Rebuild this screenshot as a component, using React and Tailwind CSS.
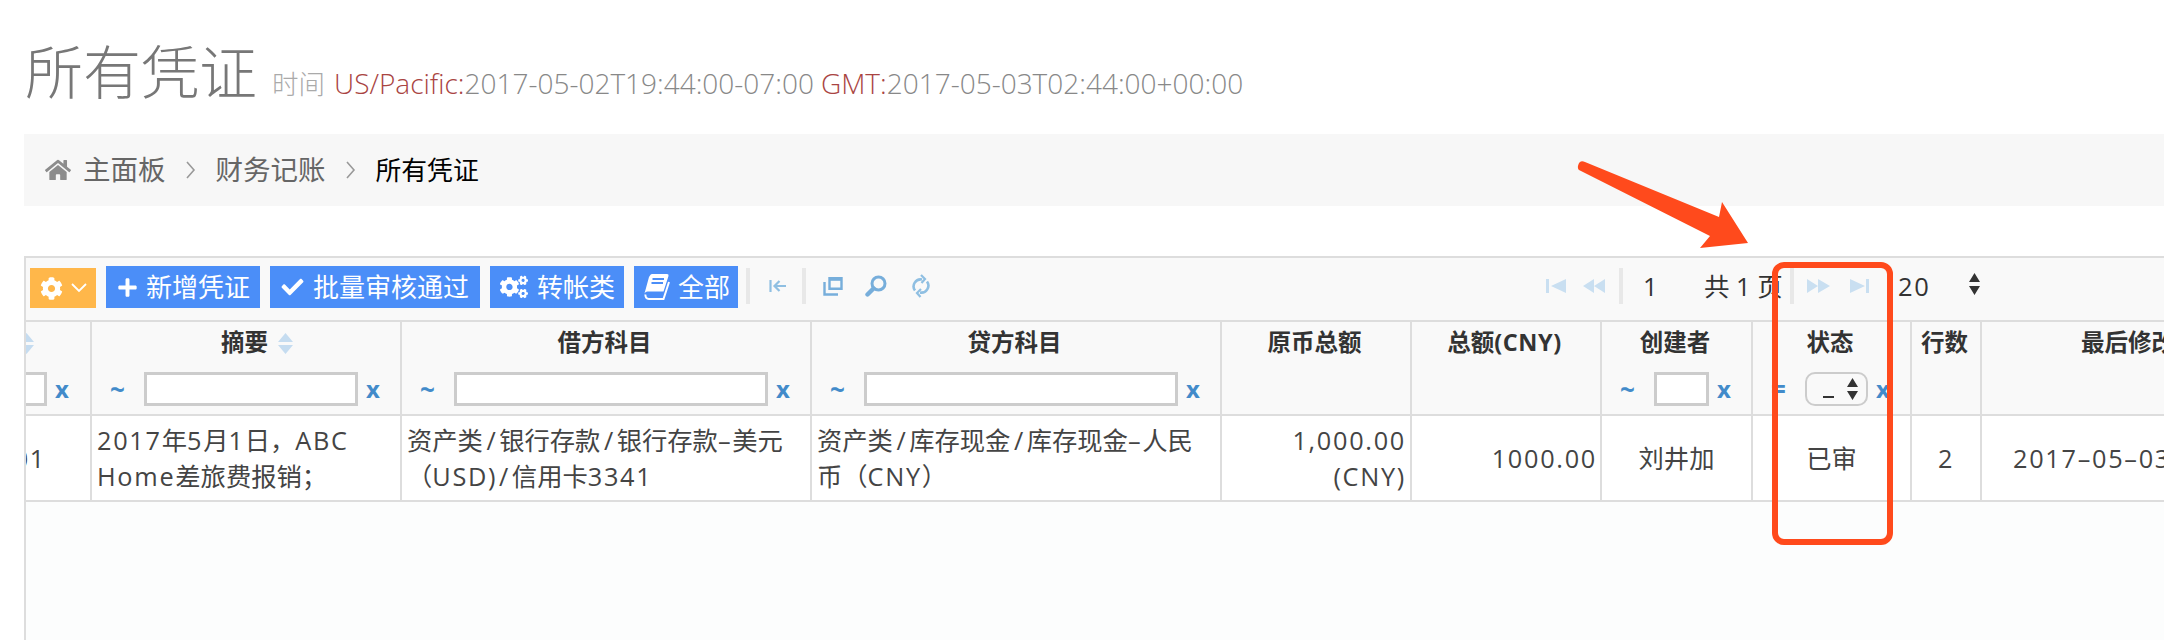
//
// ALL VOUCHERS PAGE
// =================
// Page header, breadcrumb and the voucher grid with its toolbar, filters and pager.
//
import { FaCheck, FaCog, FaCogs, FaHome, FaPlus } from "react-icons/fa";

const BaseFont = "font-['Open_Sans','Noto_Sans_CJK_SC',sans-serif]";

// Latin runs in the grid are spaced wider than the Chinese text around them.
function N({ children }) {
    return <span className="tracking-[1.7px]">{children}</span>;
}

// Path separator, also wider than Open Sans gives it
function S() {
    return <span className="mx-[3.5px]">/</span>;
}

function ToolButton({ icon, text, className }) {
    return (
        <div className={"flex items-center h-[42px] bg-[#4b8ef8] text-white text-[26px] leading-none " + className}>
            {icon}
            <span>{text}</span>
        </div>
    );
}

function Separator({ className }) {
    return <div className={"w-[4px] h-[36px] mt-[2px] bg-[#e8e8e8] " + className}></div>;
}

// Book icon, slanted like the one in the toolbar
function BookIcon() {
    return (
        <svg width="26" height="26" viewBox="0 0 26 26" className="mr-[8px] shrink-0">
            <path d="M6 1.5Q6.5 0 8 0H23Q25 0 24.5 2L19.5 17.5H3.5Q1.5 17.5 .5 19.5L5 3Z" fill="white" />
            <path d="M8.5 5H20M7.5 9H19" stroke="#4b8ef8" strokeWidth="1.8" />
            <path d="M1.5 20.5C1 23 2.5 25 5 25H19.5L25 8" fill="none" stroke="white" strokeWidth="2" />
        </svg>
    );
}

function Disabled({ d, width, className }) {
    return (
        <svg width={width} height="16" viewBox={"0 0 " + width + " 16"} className={"text-[#c9dff1] " + className} fill="currentColor">
            <path d={d} />
        </svg>
    );
}

function SortArrows({ className }) {
    return (
        <svg width="15" height="21" viewBox="0 0 15 21" fill="#c5dcf0" className={className}>
            <path d="M7.5 0 15 9H0zM0 12h15l-7.5 9z" />
        </svg>
    );
}

// One filter row: operator, input, clear link
function Filter({ op = "~", box }) {
    return (
        <div className="flex items-center h-[34px] pl-[18px] pr-[22px]">
            <span className="w-[34px] shrink-0 text-left text-[#428bca] font-bold text-[26px] leading-none">{op}</span>
            {box || <input className="flex-1 min-w-0 h-[34px] bg-white border-[3px] border-[#cccccc] outline-none" />}
            <span className="w-[12px] ml-[8px] shrink-0 text-[#428bca] font-bold text-[24px] leading-none">x</span>
        </div>
    );
}

function SelectBox() {
    return (
        <div className="flex-1 min-w-0 h-[34px] flex items-center justify-end pr-[8px] rounded-[10px] border-[2px] border-[#cccccc] bg-[#f9f9f9]">
            <div className="w-[11px] h-[2px] mt-[16px] mr-[13px] bg-[#333333]"></div>
            <svg width="11" height="22" viewBox="0 0 11 22" fill="#333333">
                <path d="M5.5 0 11 9H0zM0 13h11l-5.5 9z" />
            </svg>
        </div>
    );
}

function Th({ title, sort, filter, box, op }) {
    return (
        <th className="p-0 align-top bg-[#f9f9f9] border-r-2 border-[#dddddd] font-bold">
            <div className="flex flex-col h-[92px]">
                <div className="flex items-center justify-center gap-[10px] h-[42px] pr-[3px] text-[23.5px] text-[#333333] leading-none">
                    <span>{title}</span>
                    {sort && <SortArrows className="-mr-[25px]" />}
                </div>
                {filter && <div className="mt-[8px] font-normal"><Filter box={box} op={op} /></div>}
            </div>
        </th>
    );
}

function Td({ children, className }) {
    return (
        <td className={"h-[86px] px-[5px] py-0 align-middle bg-white border-t-2 border-r-2 border-[#dddddd] text-[25.3px] leading-[36px] whitespace-nowrap text-[#444444] " + className}>
            {children}
        </td>
    );
}

function Chevron() {
    return (
        <span className="w-[50px] flex justify-center">
            <svg width="10" height="20" viewBox="0 0 10 20" fill="none" stroke="#999999" strokeWidth="1.6"><path d="M1 2l7 8-7 8" /></svg>
        </span>
    );
}

function App() {
    return (
        <div className={"relative w-[2164px] h-[640px] overflow-hidden bg-white " + BaseFont}>
            {/* Page title */}
            <div className="flex items-baseline h-[134px] pl-[25px] pt-[38px] whitespace-nowrap">
                <h1 className="text-[58px] leading-[68px] font-light text-[#777777]">所有凭证</h1>
                <div className="ml-[15px] text-[28px] font-light text-[#888888]">
                    <span className="text-[26.5px] text-[#aaaaaa]">时间</span>
                    <span className="ml-[9px] text-[#a94442]">US/Pacific:</span>2017-05-02T19:44:00-07:00
                    <span className="ml-[7px] text-[#a94442]">GMT:</span>2017-05-03T02:44:00+00:00
                </div>
            </div>

            {/* Breadcrumb */}
            <div className="flex items-center h-[72px] ml-[24px] pl-[21px] bg-[#f7f7f7] text-[27.5px] text-[#666666]">
                <FaHome className="w-[26px] h-[24px] mr-[12px] text-[#8c8c8c]" />
                <span>主面板</span>
                <Chevron />
                <span>财务记账</span>
                <Chevron />
                <span className="text-[25.8px] text-black">所有凭证</span>
            </div>

            {/* Grid */}
            <div className="flex flex-col h-[384px] mt-[50px] ml-[24px] border-t-2 border-l-2 border-[#dddddd] bg-[#fcfdfd]">
                {/* Toolbar */}
                <div className="flex items-start shrink-0 h-[64px] pt-[8px] pl-[4px] bg-[#f9f9f9] border-b-2 border-[#dddddd] whitespace-nowrap overflow-hidden">
                    <div className="flex items-center shrink-0 w-[66px] h-[40px] mt-[2px] pl-[10px] bg-[#ffb74a] text-white">
                        <FaCog className="w-[23px] h-[23px]" />
                        <svg width="16" height="10" viewBox="0 0 16 10" fill="none" stroke="white" strokeWidth="1.8" className="ml-[8px]">
                            <path d="M1 1l7 7 7-7" />
                        </svg>
                    </div>
                    <ToolButton className="ml-[10px] pl-[11px] w-[154px] shrink-0" icon={<FaPlus className="w-[21px] h-[21px] mr-[8px]" />} text="新增凭证" />
                    <ToolButton className="ml-[10px] pl-[11px] w-[210px] shrink-0" icon={<FaCheck className="w-[23px] h-[22px] mr-[9px]" />} text="批量审核通过" />
                    <ToolButton className="ml-[10px] pl-[10px] w-[134px] shrink-0" icon={<FaCogs className="w-[28px] h-[24px] mr-[9px]" />} text="转帐类" />
                    <ToolButton className="ml-[10px] pl-[10px] w-[104px] shrink-0" icon={<BookIcon />} text="全部" />
                    <Separator className="ml-[8px] shrink-0" />
                    <svg width="18" height="16" viewBox="0 0 18 16" fill="none" stroke="#8fbfe2" strokeWidth="2.2" className="ml-[19px] mt-[12px] shrink-0">
                        <path d="M1.5 2v12M17 8H6M10.5 3 5.5 8l5 5" />
                    </svg>
                    <Separator className="ml-[15px] shrink-0" />
                    {/* New window */}
                    <svg width="20" height="20" viewBox="0 0 20 20" fill="none" stroke="#77aedb" strokeWidth="2.4" className="ml-[17px] mt-[10px] shrink-0">
                        <path d="M6.5 2.2h12v10.5h-12z" />
                        <path d="M6.5 3h12" strokeWidth="3.6" />
                        <path d="M1.5 6v12.5h13.5" />
                    </svg>
                    {/* Find */}
                    <svg width="22" height="22" viewBox="0 0 22 22" fill="none" stroke="#77aedb" className="ml-[22px] mt-[9px] shrink-0">
                        <circle cx="13.5" cy="8.5" r="6.5" strokeWidth="3" />
                        <path d="M8.5 13.5 2.5 19.5" strokeWidth="4.4" strokeLinecap="round" />
                    </svg>
                    {/* Refresh */}
                    <svg width="20" height="24" viewBox="0 0 20 24" fill="none" stroke="#8fbfe2" strokeWidth="2.6" className="ml-[24px] mt-[8px] shrink-0">
                        <path d="M11 5.5A7 7 0 0 0 4 16.5" />
                        <path d="M9 18.5A7 7 0 0 0 16 7.5" />
                        <path d="M10 1 14 5 10.5 9" strokeWidth="2.2" />
                        <path d="M10 15 6 19 9.5 23" strokeWidth="2.2" />
                    </svg>

                    {/* Pager */}
                    <div className="flex items-start shrink-0 ml-[615px] text-[25.5px] leading-[40px] text-[#333333]">
                        <Disabled width={20} d="M0 1h3v14H0zM20 1v14L5 8z" className="mt-[12px]" />
                        <Disabled width={22} d="M0 8l11-7v14zM11 8l11-7v14z" className="ml-[17px] mt-[12px]" />
                        <Separator className="ml-[14px]" />
                        <span className="ml-[20px] w-[12px]">1</span>
                        <span className="ml-[49px] w-[80px]">共 1 页</span>
                        <Separator className="ml-[6px]" />
                        <Disabled width={23} d="M0 1l11 7-11 7zM11 1l12 7-12 7z" className="ml-[13px] mt-[12px]" />
                        <Disabled width={19} d="M0 1l15 7-15 7zM16 1h3v14h-3z" className="ml-[20px] mt-[12px]" />
                        <span className="ml-[29px] w-[30px]"><N>20</N></span>
                        <svg width="11" height="22" viewBox="0 0 11 22" fill="#333333" className="ml-[41px] mt-[7px]">
                            <path d="M5.5 0 11 9H0zM0 13h11l-5.5 9z" />
                        </svg>
                    </div>
                </div>

                {/* Table, scrolled a little to the right as in the page */}
                <div className="overflow-hidden">
                    <table className="table-fixed border-separate border-spacing-0 w-[2334px] -ml-[34px]">
                        <colgroup>
                            <col className="w-[100px]" />
                            <col className="w-[310px]" />
                            <col className="w-[410px]" />
                            <col className="w-[410px]" />
                            <col className="w-[190px]" />
                            <col className="w-[190px]" />
                            <col className="w-[151px]" />
                            <col className="w-[159px]" />
                            <col className="w-[70px]" />
                            <col className="w-[344px]" />
                        </colgroup>
                        <thead>
                            <tr>
                                <th className="p-0 align-top bg-[#f9f9f9] border-r-2 border-[#dddddd]">
                                    <div className="flex flex-col items-end h-[92px] overflow-hidden">
                                        <div className="flex items-center h-[42px] pr-[56px]"><SortArrows /></div>
                                        <div className="flex items-center h-[34px] mt-[8px] pr-[23px]">
                                            <input className="w-[40px] h-[34px] bg-white border-[3px] border-[#cccccc] outline-none" />
                                            <span className="w-[12px] ml-[8px] text-[#428bca] font-bold text-[24px] leading-none">x</span>
                                        </div>
                                    </div>
                                </th>
                                <Th title="摘要" sort filter />
                                <Th title="借方科目" filter />
                                <Th title="贷方科目" filter />
                                <Th title="原币总额" />
                                <Th title={<span>总额<span className="tracking-[0.6px]">(CNY)</span></span>} />
                                <Th title="创建者" filter />
                                <Th title="状态" filter op="=" box={<SelectBox />} />
                                <Th title="行数" />
                                <Th title="最后修改时间" />
                            </tr>
                        </thead>
                        <tbody>
                            <tr>
                                <Td className="text-right !pr-[44px]"><N>001</N></Td>
                                <Td><N>2017</N>年<N>5</N>月<N>1</N>日，<N>ABC</N><br /><N>Home</N>差旅费报销；</Td>
                                <Td>资产类<S />银行存款<S />银行存款<N>–</N>美元<br />（<N>USD</N>)<S />信用卡<N>3341</N></Td>
                                <Td>资产类<S />库存现金<S />库存现金<N>–</N>人民<br />币（<N>CNY</N>）</Td>
                                <Td className="text-right !pr-[4px]"><N>1,000.00</N><br /><N>(CNY)</N></Td>
                                <Td className="text-right !pr-[3px]"><N>1000.00</N></Td>
                                <Td className="text-center">刘井加</Td>
                                <Td className="text-center">已审</Td>
                                <Td className="text-center"><N>2</N></Td>
                                <Td className="text-center"><N>2017–05–03 10:44:00</N></Td>
                            </tr>
                            <tr>
                                <td colSpan={10} className="h-[2px] p-0 bg-[#dddddd]"></td>
                            </tr>
                        </tbody>
                    </table>
                </div>
            </div>

            {/* Red annotation drawn over the screenshot */}
            <svg width="190" height="100" viewBox="0 0 190 100" className="absolute left-[1570px] top-[155px]" fill="#ff4a1c">
                <path d="M10 7C11 6 13 6 15 7L149 62 152 47 178 88 130 93 140 81 9 15C7 13 8 9 10 7Z" />
            </svg>
            <div className="absolute left-[1772px] top-[262px] w-[121px] h-[283px] rounded-[12px] border-[6px] border-[#ff4a1c]"></div>
        </div>
    );
}
export default App
